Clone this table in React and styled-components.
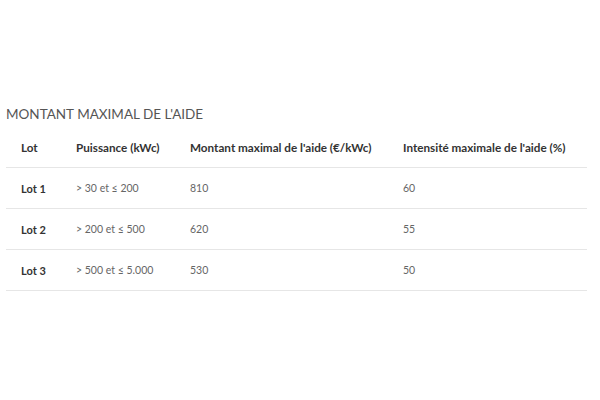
import React from "react";
import styled, { createGlobalStyle } from "styled-components";

const GlobalStyle = createGlobalStyle`
  html, body {
    margin: 0;
    padding: 0;
    background: #ffffff;
  }
  body {
    font-family: Lato, "Open Sans", sans-serif;
  }
`;

const Page = styled.div`
  width: 600px;
  height: 400px;
  box-sizing: border-box;
  padding: 104px 13px 0 6px;
`;

const Title = styled.h2`
  margin: 0 0 3px;
  font-size: 13.5px;
  line-height: 20px;
  font-weight: 400;
  color: #555555;
`;

const Table = styled.div`
  display: grid;
  grid-template-columns: 55px 114px 213px 1fr;
`;

const Cell = styled.div`
  height: 40px;
  display: flex;
  align-items: center;
  padding-left: 15px;
  font-size: ${(p) => (p.$head ? "11.7px" : p.$bold ? "11px" : "10.5px")};
  font-weight: ${(p) => (p.$bold ? 700 : 400)};
  color: ${(p) => (p.$bold ? "#333333" : "#666666")};
  border-bottom: 1px solid #e6e6e6;
  white-space: nowrap;
`;

const headers = [
  "Lot",
  "Puissance (kWc)",
  "Montant maximal de l'aide (€/kWc)",
  "Intensité maximale de l'aide (%)",
];

const rows = [
  ["Lot 1", "> 30 et ≤ 200", "810", "60"],
  ["Lot 2", "> 200 et ≤ 500", "620", "55"],
  ["Lot 3", "> 500 et ≤ 5.000", "530", "50"],
];

export default function App() {
  return (
    <Page>
      <GlobalStyle />
      <Title>MONTANT MAXIMAL DE L'AIDE</Title>
      <Table>
        {headers.map((h) => (
          <Cell key={h} $head $bold>
            {h}
          </Cell>
        ))}
        {rows.map((r) =>
          r.map((v, i) => (
            <Cell key={r[0] + i} $bold={i === 0}>
              {v}
            </Cell>
          ))
        )}
      </Table>
    </Page>
  );
}
